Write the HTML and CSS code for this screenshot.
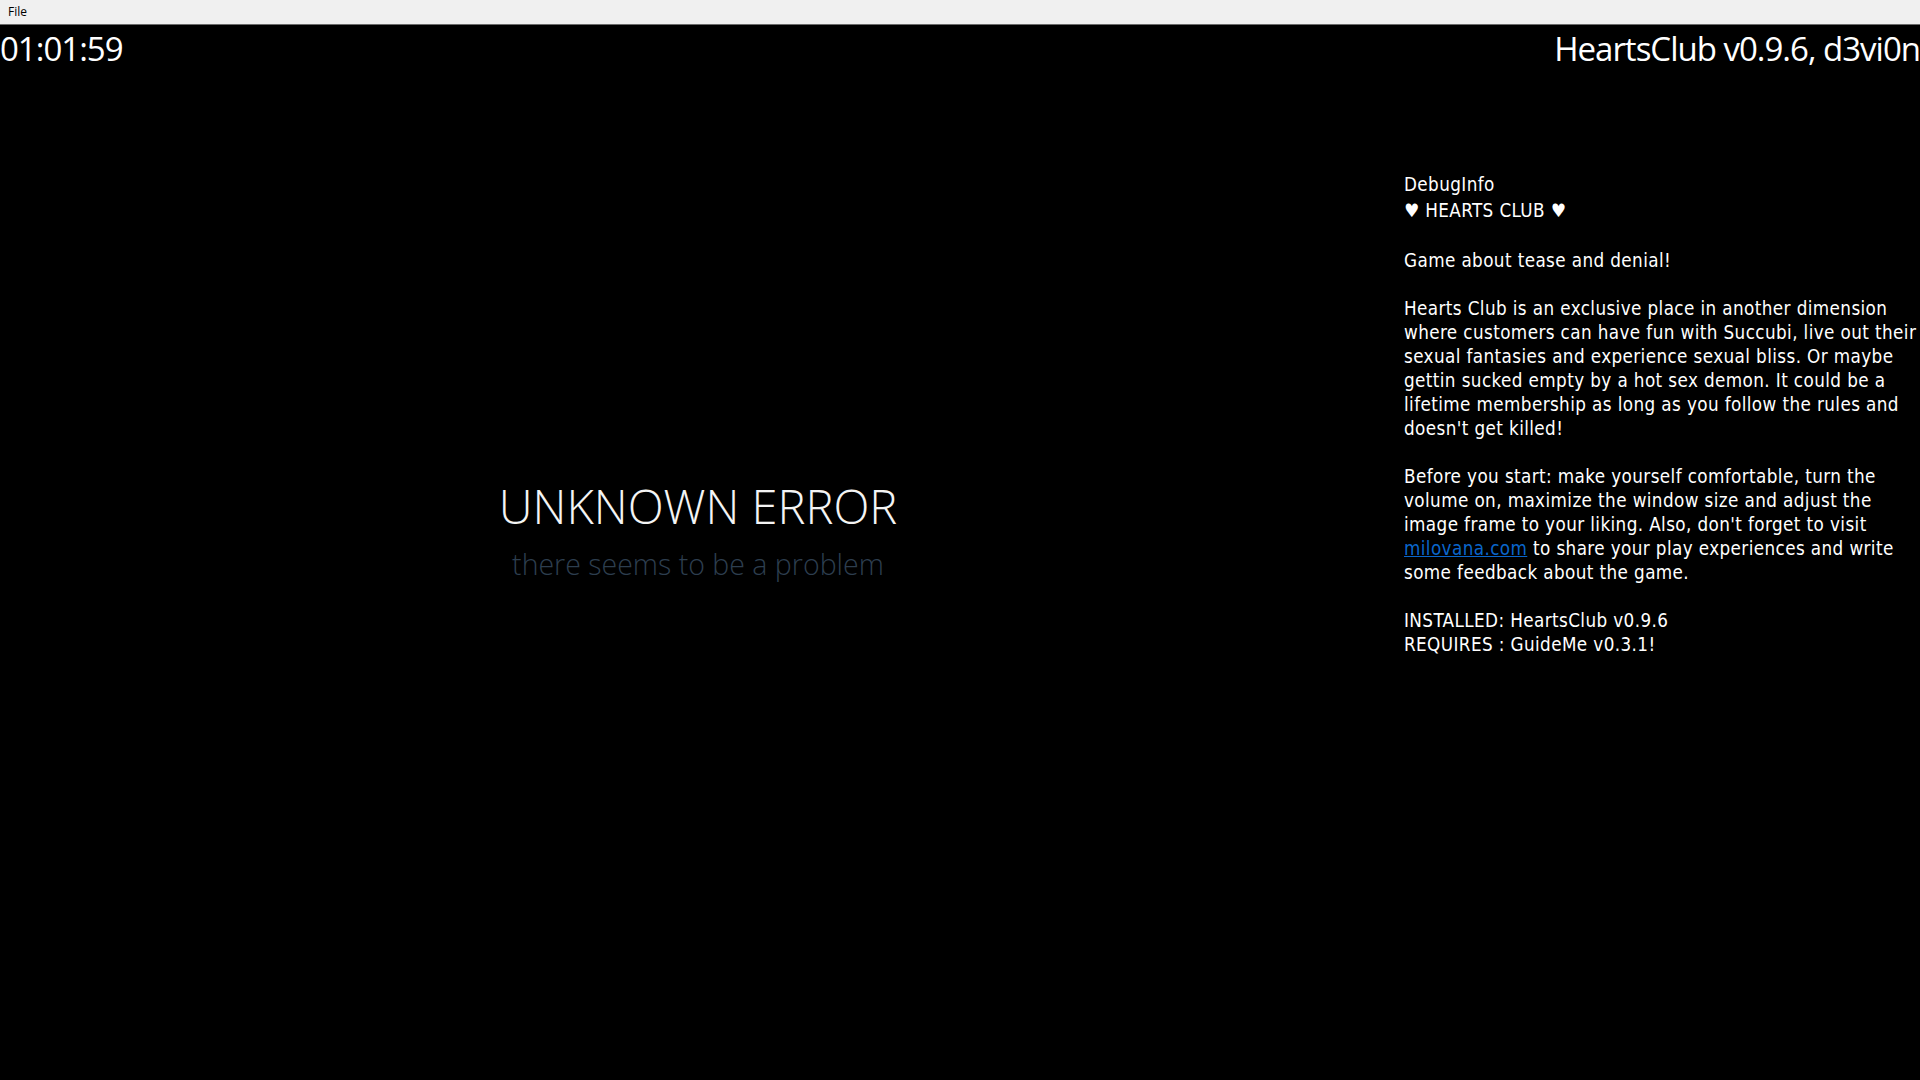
FILE: index.html
```html
<!doctype html>
<html>
<head>
	<meta charset="UTF-8">
	<meta name="viewport" content="width=device-width, initial-scale=1.0">
	<title>HeartsClub</title>
	<link rel="stylesheet" href="styles.css">
</head>
<body>
	<div class='menubar'>
		<span class='menu-item'>File</span>
	</div>
	<div class='stage'>
		<div class='header'>
			<div class='timer'>01:01:59</div>
			<div class='title'>HeartsClub v0.9.6, d3vi0n</div>
		</div>
		<div class='content'>
			<div class='picture'>
				<div class='error'>
					<div class='error-title'>UNKNOWN ERROR</div>
					<div class='error-sub'>there seems to be a problem</div>
				</div>
			</div>
			<div class='debug'>
				<div class='debug-label'>DebugInfo</div>
				<div class='debug-head'>&#9829; HEARTS CLUB &#9829;</div>
				<p class='intro'>Game about tease and denial!</p>
				<p>Hearts Club is an exclusive place in another dimension<br>
				where customers can have fun with Succubi, live out their<br>
				sexual fantasies and experience sexual bliss. Or maybe<br>
				gettin sucked empty by a hot sex demon. It could be a<br>
				lifetime membership as long as you follow the rules and<br>
				doesn't get killed!</p>
				<p>Before you start: make yourself comfortable, turn the<br>
				volume on, maximize the window size and adjust the<br>
				image frame to your liking. Also, don't forget to visit<br>
				<a href='#'>milovana.com</a> to share your play experiences and write<br>
				some feedback about the game.</p>
				<p>INSTALLED: HeartsClub v0.9.6<br>REQUIRES : GuideMe v0.3.1!</p>
			</div>
		</div>
	</div>
</body>
</html>
```

FILE: styles.css
```css
* {
	padding: 0;
	margin: 0;
	box-sizing: border-box;
}
html, body {
	height: 100%;
}
body {
	background-color: #000;
	color: #fff;
	overflow: hidden;
	display: flex;
	flex-direction: column;
}
.menubar {
	height: 25px;
	background-color: #f0f0f0;
	border-bottom: 1px solid #6a6a6a;
	font-family: "Open Sans", "Liberation Sans", sans-serif;
	font-size: 12px;
	color: #000;
	padding: 3px 8px 0;
}
.stage {
	flex: 1;
	display: flex;
	flex-direction: column;
}
.header {
	display: flex;
	justify-content: space-between;
	font-family: "Open Sans", "Liberation Sans", sans-serif;
	font-size: 33px;
	letter-spacing: -1px;
	line-height: 40px;
	padding-top: 4px;
}
.content {
	flex: 1;
	display: flex;
}
.picture {
	flex: 1;
	display: flex;
	justify-content: center;
	padding-top: 408px;
	padding-right: 8px;
}
.error {
	text-align: center;
	font-family: "Open Sans", Lato, sans-serif;
	font-weight: 300;
}
.error-title {
	font-size: 47px;
	line-height: 58px;
	color: #f4f4f4;
}
.error-sub {
	font-size: 28.5px;
	line-height: 36px;
	margin-top: 11px;
	color: #2d3e4f;
}
.debug {
	width: 516px;
	padding-top: 104px;
	font-family: "DejaVu Sans Condensed", "DejaVu Sans", sans-serif;
	font-size: 18.7px;
	letter-spacing: 0.4px;
	line-height: 24px;
	white-space: nowrap;
	overflow: hidden;
}
.debug-head {
	margin-top: 2px;
}
.debug p {
	margin-top: 24px;
}
.debug p.intro {
	margin-top: 26px;
}
.debug a {
	color: #0a66cc;
}
```
